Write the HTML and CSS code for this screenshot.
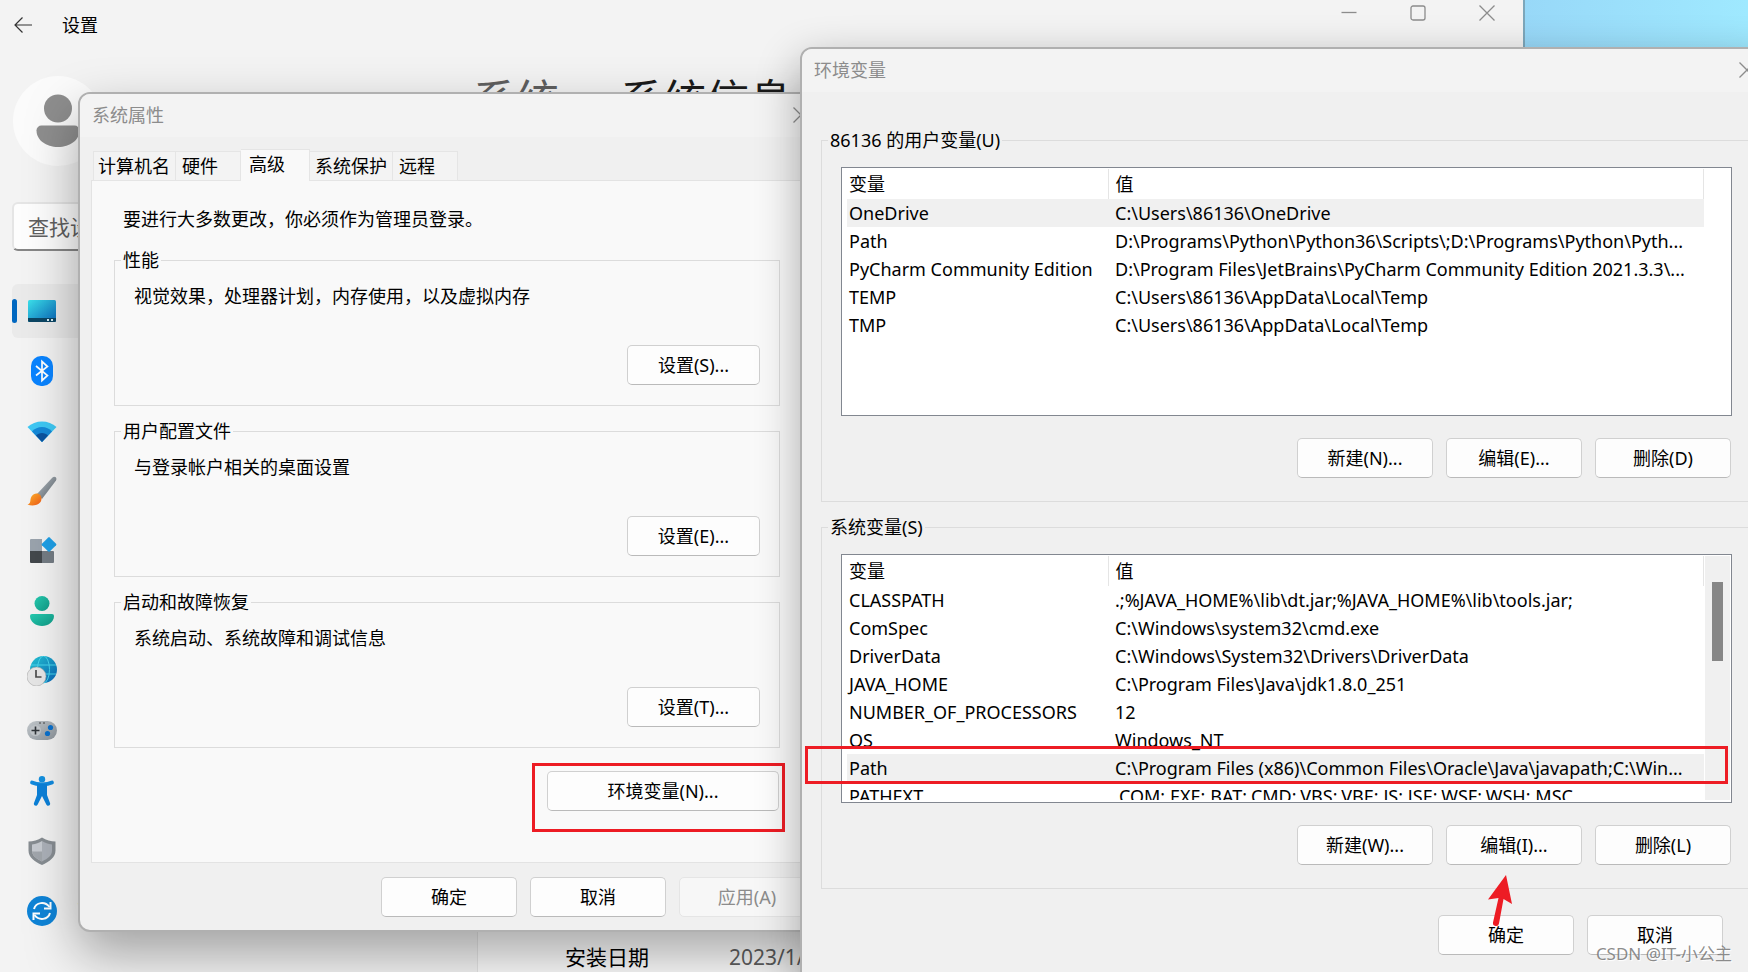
FILE: index.html
```html
<!DOCTYPE html>
<html lang="zh-CN">
<head>
<meta charset="utf-8">
<title>环境变量</title>
<link rel="stylesheet" href="styles.css">
</head>
<body>
<div class="desktop">
  <main class="settings">
    <header class="settings-bar">
      <button class="icon-btn" aria-label="返回"><svg width="20" height="18" viewBox="0 0 20 18" fill="none" stroke="#333" stroke-width="1.200"><path d="M19 9H2M9.500 1.500L2 9l7.500 7.500"/></svg></button>
      <span class="settings-name">设置</span>
      <div class="window-controls">
        <button class="icon-btn" aria-label="最小化"><svg width="16" height="16" viewBox="0 0 16 16" stroke="#8c8c8c" stroke-width="1.300"><path d="M0.500 7.500h15"/></svg></button>
        <button class="icon-btn" aria-label="最大化"><svg width="16" height="16" viewBox="0 0 16 16" fill="none" stroke="#8c8c8c" stroke-width="1.300"><rect x="1" y="1" width="14" height="14" rx="2"/></svg></button>
        <button class="icon-btn" aria-label="关闭"><svg width="16" height="16" viewBox="0 0 16 16" stroke="#8c8c8c" stroke-width="1.300"><path d="M.5.500l15 15M15.500.500l-15 15"/></svg></button>
      </div>
    </header>
    <div class="settings-body">
      <aside class="sidebar">
        <svg class="avatar" width="90" height="90" viewBox="0 0 90 90"><circle cx="45" cy="45" r="45" fill="#fbfbfb"/><circle cx="45" cy="32.500" r="14" fill="#8e8e8e"/><path d="M28.500 49.500h33a5 5 0 0 1 5 5C66.500 64 57 71 45 71s-21.500-7-21.500-16.500a5 5 0 0 1 5-5z" fill="#8e8e8e"/></svg>
        <input class="search" type="text" placeholder="查找设置" aria-label="查找设置">
        <nav class="nav">
          <a class="nav-item current" href="#system"><svg width="30" height="30" viewBox="0 0 30 30"><defs><linearGradient id="scr" x1="0" y1="0" x2="1" y2="1"><stop offset="0" stop-color="#3be0ea"/><stop offset="1" stop-color="#0a68bb"/></linearGradient></defs><rect x="1" y="4" width="28" height="22" rx="1.500" fill="url(#scr)"/><path d="M1 22h28v2.500a1.500 1.500 0 0 1-1.500 1.500h-25A1.500 1.500 0 0 1 1 24.500z" fill="#0c4664"/><path d="M20 23h2v2h-2zM24 23h2v2h-2z" fill="#d8eef5"/></svg>系统</a>
          <a class="nav-item" href="#bluetooth"><svg width="30" height="30" viewBox="0 0 30 30"><rect x="4" y="0" width="22" height="30" rx="10" fill="#0a84ff"/><path d="M9 10l11.500 9.500L15 24.500v-19l5.500 5L9 19.500" fill="none" stroke="#fff" stroke-width="1.700"/></svg>蓝牙和其他设备</a>
          <a class="nav-item" href="#network"><svg width="30" height="30" viewBox="0 0 30 30"><path d="M15 26L.5 11C8 3.500 22 3.500 29.500 11z" fill="#3ec8f4"/><path d="M15 26L5 15.500C10 9.500 20 9.500 25 15.500z" fill="#1589d8"/><path d="M15 26L9 19.500C12 16 18 16 21 19.500z" fill="#0b539f"/></svg>网络和 Internet</a>
          <a class="nav-item" href="#personal"><svg width="30" height="30" viewBox="0 0 30 30"><defs><linearGradient id="han" x1="0" y1="0" x2="1" y2="1"><stop offset="0" stop-color="#bcc3c9"/><stop offset="1" stop-color="#59636b"/></linearGradient><linearGradient id="tip" x1="0" y1="0" x2="1" y2="1"><stop offset="0" stop-color="#ffb52b"/><stop offset="1" stop-color="#ee5a18"/></linearGradient></defs><path d="M10 18L25.500 1.500c2-2 5 0 3.500 3L15 23z" fill="url(#han)"/><path d="M.5 28.500c4-1 2-4.500 4-8 3-5 10-3.500 10 2 0 7-9 8-14 6z" fill="url(#tip)"/></svg>个性化</a>
          <a class="nav-item" href="#apps"><svg width="30" height="30" viewBox="0 0 30 30"><path d="M3 4a1 1 0 0 1 1-1h11v12H3z" fill="#9aa3ad"/><path d="M3 15h12v12H4a1 1 0 0 1-1-1z" fill="#43484c"/><path d="M15 15h11a1 1 0 0 1 1 1v10a1 1 0 0 1-1 1H15z" fill="#747c84"/><rect x="16.500" y="3" width="11" height="11" rx="1" fill="#1e9fe6" transform="rotate(45 22 8.500)"/></svg>应用</a>
          <a class="nav-item" href="#accounts"><svg width="30" height="30" viewBox="0 0 30 30"><defs><linearGradient id="acc" x1="0" y1="0" x2="1" y2="1"><stop offset="0" stop-color="#26cbb0"/><stop offset="1" stop-color="#109a86"/></linearGradient></defs><circle cx="15" cy="7.500" r="7.500" fill="url(#acc)"/><path d="M5 18h20a2 2 0 0 1 2 2c0 6-6 10-12 10S3 26 3 20a2 2 0 0 1 2-2z" fill="url(#acc)"/></svg>帐户</a>
          <a class="nav-item" href="#time"><svg width="30" height="30" viewBox="0 0 30 30"><defs><linearGradient id="glo" x1="0" y1="0" x2="1" y2="1"><stop offset="0" stop-color="#25c5d4"/><stop offset="1" stop-color="#0a66b8"/></linearGradient></defs><circle cx="16.500" cy="13.500" r="13.500" fill="url(#glo)"/><ellipse cx="16.500" cy="13.500" rx="6" ry="13.500" fill="none" stroke="#48d5ec"/><path d="M4 9h25M4 18h25" stroke="#48d5ec"/><circle cx="9.500" cy="20.500" r="9.500" fill="#e6e6e6" stroke="#aaa" stroke-width=".6"/><path d="M9 14v7h5.500" fill="none" stroke="#4d4d4d" stroke-width="1.700"/></svg>时间和语言</a>
          <a class="nav-item" href="#gaming"><svg width="30" height="30" viewBox="0 0 30 30"><defs><linearGradient id="pad" x1="0" y1="0" x2="1" y2="1"><stop offset="0" stop-color="#c3c8cc"/><stop offset="1" stop-color="#8c949b"/></linearGradient></defs><rect x="0" y="5" width="30" height="19" rx="9.500" fill="url(#pad)"/><circle cx="8.500" cy="14.500" r="5.500" fill="#c0c5c9"/><path d="M8.500 10.500v8M4.500 14.500h8" stroke="#30353a" stroke-width="1.600"/><circle cx="23.500" cy="11.500" r="2.600" fill="#0a70cc"/><circle cx="20.500" cy="17.500" r="2.600" fill="#0a70cc"/><path d="M12 7h2M16 7h2" stroke="#444"/></svg>游戏</a>
          <a class="nav-item" href="#access"><svg width="30" height="30" viewBox="0 0 30 30"><circle cx="15" cy="3.300" r="3.200" fill="#1490df"/><path d="M5 6.500c5 2.500 15 2.500 20 0" fill="none" stroke="#118ade" stroke-width="3.800" stroke-linecap="round"/><path d="M10 8h10v11l3 8c1 2.500-2.500 4-3.700 1.500L15 20l-4.300 8.500C9.500 31 6 29.500 7 27l3-8z" fill="#0c80d8"/></svg>辅助功能</a>
          <a class="nav-item" href="#privacy"><svg width="30" height="30" viewBox="0 0 30 30"><path d="M15 1.500c4 2.500 9 4 13.500 4v9c0 7-6 11-13.500 14.500C7.500 25.500 1.500 21.500 1.500 14.500v-9C6 5.500 11 4 15 1.500z" fill="#878d92"/><path d="M15 5v20.500c-6-3-10-6-10-11V8.500C9 8 12 7 15 5z" fill="#c6cad0"/><path d="M15 5c3 2 6 3 10 3.500v6c0 5-4 8-10 11z" fill="#abb0b8"/><path d="M5 15.500h10v10c-5-2.500-9-5-10-10z" fill="#a1a6ac"/></svg>隐私和安全性</a>
          <a class="nav-item" href="#update"><svg width="30" height="30" viewBox="0 0 30 30"><circle cx="15" cy="15" r="15" fill="#0f84d7"/><path d="M7 13c2-7 11-8 15.500-2M23 17c-2 7-11 8-15.500 2" fill="none" stroke="#fff" stroke-width="2"/><path d="M23.500 6v6.500H17M6.500 24v-6.500H13" fill="none" stroke="#fff" stroke-width="2"/></svg>Windows 更新</a>
        </nav>
      </aside>
      <section class="content">
        <h1 class="crumbs"><span class="crumb-parent">系统</span><span class="crumb-sep">›</span><span>系统信息</span></h1>
        <dl class="spec"><dt>安装日期</dt><dd>2023/1/1</dd></dl>
      </section>
    </div>
  </main>

  <section class="dialog properties" aria-label="系统属性">
    <header class="dialog-bar"><span>系统属性</span><button class="icon-btn" aria-label="关闭"><svg width="16" height="16" viewBox="0 0 16 16" stroke="#8c8c8c" stroke-width="1.300"><path d="M.5.500l15 15M15.500.500l-15 15"/></svg></button></header>
    <div class="properties-body">
      <div class="tabs" role="tablist">
        <button class="tab tab-wide" role="tab">计算机名</button><button class="tab" role="tab">硬件</button><button class="tab tab-active" role="tab" aria-selected="true">高级</button><button class="tab tab-wide" role="tab">系统保护</button><button class="tab" role="tab">远程</button>
      </div>
      <div class="panel">
        <p class="notice">要进行大多数更改，你必须作为管理员登录。</p>
        <fieldset class="group"><legend>性能</legend><p>视觉效果，处理器计划，内存使用，以及虚拟内存</p><button class="btn">设置(S)...</button></fieldset>
        <fieldset class="group"><legend>用户配置文件</legend><p>与登录帐户相关的桌面设置</p><button class="btn">设置(E)...</button></fieldset>
        <fieldset class="group"><legend>启动和故障恢复</legend><p>系统启动、系统故障和调试信息</p><button class="btn">设置(T)...</button></fieldset>
        <div class="env-launch"><button class="btn btn-env">环境变量(N)...</button><span class="mark mark-env"></span></div>
      </div>
      <div class="actions"><button class="btn">确定</button><button class="btn">取消</button><button class="btn" disabled>应用(A)</button></div>
    </div>
  </section>

  <section class="dialog environment" aria-label="环境变量">
    <header class="dialog-bar"><span>环境变量</span><button class="icon-btn" aria-label="关闭"><svg width="16" height="16" viewBox="0 0 16 16" stroke="#8c8c8c" stroke-width="1.300"><path d="M.5.500l15 15M15.500.500l-15 15"/></svg></button></header>
    <div class="environment-body">
      <fieldset class="vars"><legend>86136 的用户变量(U)</legend>
        <div class="list">
          <table>
            <thead><tr><th class="name-col">变量</th><th>值</th></tr></thead>
            <tbody>
              <tr class="selected"><td>OneDrive</td><td>C:\Users\86136\OneDrive</td></tr>
              <tr><td>Path</td><td>D:\Programs\Python\Python36\Scripts\;D:\Programs\Python\Pyth...</td></tr>
              <tr><td>PyCharm Community Edition</td><td>D:\Program Files\JetBrains\PyCharm Community Edition 2021.3.3\...</td></tr>
              <tr><td>TEMP</td><td>C:\Users\86136\AppData\Local\Temp</td></tr>
              <tr><td>TMP</td><td>C:\Users\86136\AppData\Local\Temp</td></tr>
            </tbody>
          </table>
        </div>
        <div class="actions"><button class="btn">新建(N)...</button><button class="btn">编辑(E)...</button><button class="btn">删除(D)</button></div>
      </fieldset>
      <fieldset class="vars"><legend>系统变量(S)</legend>
        <div class="marked-list">
          <div class="list">
            <table>
              <thead><tr><th class="name-col">变量</th><th>值</th></tr></thead>
              <tbody>
                <tr><td>CLASSPATH</td><td>.;%JAVA_HOME%\lib\dt.jar;%JAVA_HOME%\lib\tools.jar;</td></tr>
                <tr><td>ComSpec</td><td>C:\Windows\system32\cmd.exe</td></tr>
                <tr><td>DriverData</td><td>C:\Windows\System32\Drivers\DriverData</td></tr>
                <tr><td>JAVA_HOME</td><td>C:\Program Files\Java\jdk1.8.0_251</td></tr>
                <tr><td>NUMBER_OF_PROCESSORS</td><td>12</td></tr>
                <tr><td>OS</td><td>Windows_NT</td></tr>
                <tr class="selected"><td>Path</td><td>C:\Program Files (x86)\Common Files\Oracle\Java\javapath;C:\Win...</td></tr>
                <tr><td>PATHEXT</td><td>.COM;.EXE;.BAT;.CMD;.VBS;.VBE;.JS;.JSE;.WSF;.WSH;.MSC</td></tr>
              </tbody>
            </table>
            <div class="scroller"><div class="thumb"></div></div>
          </div>
          <span class="mark mark-path"></span>
        </div>
        <div class="actions"><button class="btn">新建(W)...</button><div class="pointed"><button class="btn">编辑(I)...</button><svg class="arrow" width="26" height="54" viewBox="0 0 26 54"><path d="M18 0l6 29-8.500-5L11 48.500a3 3 0 0 1-6-1L10.500 23 0 24.500z" fill="#ed1c24"/></svg></div><button class="btn">删除(L)</button></div>
      </fieldset>
      <div class="actions confirm"><button class="btn">确定</button><button class="btn">取消</button></div>
    </div>
  </section>
  <div class="watermark">CSDN @IT-小公主</div>
</div>
</body>
</html>
```
FILE: styles.css
```css
* { box-sizing: border-box; }
body {
  margin: 0;
  font: 18px/24px "Noto Sans", "Noto Sans CJK SC", sans-serif;
  color: #000;
}
p, h1, dl, dd { margin: 0; }
button, input { font: inherit; color: inherit; }
.desktop {
  position: relative;
  height: 100vh;
  overflow: hidden;
  background: linear-gradient(90deg, #98d8f8 87%, #9fe9ff 100%);
}
.icon-btn {
  display: flex;
  padding: 0;
  border: 0;
  background: none;
}

/* Settings window */
.settings {
  display: flex;
  flex-direction: column;
  height: 100%;
  margin-right: 223px;
  border-right: 2px solid #7da7bb;
  background: #f3f3f3;
}
.settings-bar {
  display: flex;
  align-items: center;
  height: 50px;
  padding: 0 28px 0 13px;
  flex: none;
}
.settings-name { margin-left: 29px; }
.window-controls {
  display: flex;
  gap: 53px;
  margin-left: auto;
  align-self: flex-start;
  padding-top: 5px;
}
.settings-body { display: flex; flex: 1; min-height: 0; }
.sidebar { flex: none; width: 477px; padding: 26px 0 0 12px; }
.avatar { display: block; margin-left: 1px; }
.search {
  display: block;
  width: 420px;
  height: 49px;
  margin: 36px 0 33px;
  padding: 0 14px;
  border: 2px solid #e5e5e5;
  border-bottom-color: #868686;
  border-radius: 6px;
  background: #fdfdfd;
  font-size: 21px;
}
.search::placeholder { color: #606060; opacity: 1; }
.nav { display: grid; gap: 6px; }
.nav-item {
  position: relative;
  display: flex;
  align-items: center;
  gap: 21px;
  width: 420px;
  height: 54px;
  padding-left: 15px;
  border-radius: 6px;
  color: #1b1b1b;
  font-size: 21px;
  text-decoration: none;
}
.current { background: #eaeaea; }
.current::before {
  content: "";
  position: absolute;
  left: 0;
  top: 15px;
  width: 5px;
  height: 24px;
  border-radius: 3px;
  background: #0067c0;
}
.content {
  display: flex;
  flex: 1;
  flex-direction: column;
  justify-content: space-between;
  padding-top: 20px;
}
.crumbs {
  display: flex;
  gap: 24px;
  margin-left: -4px;
  font-size: 43px;
  font-weight: 400;
  line-height: 60px;
  color: #1b1b1b;
}
.crumb-parent, .crumb-sep { color: #5f5f5f; }
.spec {
  display: grid;
  grid-template-columns: 164px 1fr;
  margin-right: 60px;
  padding: 66px 0 3px 87px;
  border-left: 1px solid #e5e5e5;
  background: #fbfbfb;
  font-size: 21px;
}
.spec dd { color: #5f5f5f; }

/* Dialog windows */
.dialog {
  position: absolute;
  overflow: hidden;
  border: 2px solid #b0b0b0;
  border-radius: 12px;
  background: #f0f0f0;
  background-clip: padding-box;
}
.dialog-bar {
  display: flex;
  align-items: center;
  justify-content: space-between;
  height: 43px;
  padding: 0 18px 2px 12px;
  background: #f3f3f3;
  color: #8c8c8c;
}
.properties {
  left: 78px;
  top: 92px;
  width: 751px;
  box-shadow: 0 22px 52px rgba(0, 0, 0, .34);
}
.environment {
  left: 800px;
  right: -27px;
  top: 47px;
  bottom: -40px;
  box-shadow: 0 14px 44px rgba(0, 0, 0, .32);
}
.btn {
  width: 136px;
  height: 40px;
  padding: 0;
  border: 1px solid #d0d0d0;
  border-bottom-color: #bababa;
  border-radius: 5px;
  background: #fdfdfd;
  white-space: nowrap;
}
.btn:disabled { border-color: #e5e5e5; background: #f7f7f7; color: #8c8c8c; }
.actions { display: flex; justify-content: flex-end; gap: 13px; }
fieldset { min-width: 0; margin: 0; border: 1px solid #dcdcdc; }
legend { margin-left: 6px; padding: 0 2px; }

/* System properties */
.properties-body { padding: 12px 12px 13px 11px; }
.tabs { display: flex; align-items: flex-end; margin: 0 0 -1px 2px; }
.tab {
  width: 65px;
  height: 30px;
  padding: 0 0 0 6px;
  border: 1px solid #e5e5e5;
  border-left-width: 0;
  background: #f3f3f3;
  text-align: left;
  white-space: nowrap;
}
.tab-wide { width: 83px; padding-left: 5px; }
.tab:first-child { border-left-width: 1px; padding-left: 4px; }
.tab-active {
  width: 69px;
  height: 32px;
  padding: 0 0 4px 8px;
  border-bottom: 0;
  background: #f9f9f9;
}
.panel {
  padding: 26px 34px 51px 22px;
  border: 1px solid #e3e3e3;
  background: #f9f9f9;
}
.notice { padding-left: 9px; margin-bottom: 17px; }
.group {
  display: flow-root;
  margin-bottom: 13px;
  padding: 12px 19px 20px 0;
}
.group p { margin-left: 19px; }
.group .btn { display: block; width: 133px; margin: 37px 0 0 auto; }
.env-launch { position: relative; width: 232px; margin: 23px 1px 0 auto; }
.btn-env { display: block; width: 100%; }
.properties-body > .actions { margin-top: 14px; }
.mark {
  position: absolute;
  border: 3px solid #ed1c24;
  pointer-events: none;
}
.mark-env { inset: -8px -6px -21px -15px; }

/* Environment variables */
.environment-body { padding: 36px 21px 20px 19px; }
.vars { padding: 15px 19px 23px; margin-bottom: 13px; }
.vars legend { margin-left: -13px; }
.list {
  display: flex;
  align-items: flex-start;
  height: 249px;
  padding: 1px 1px 2px 5px;
  overflow: clip;
  overflow-clip-margin: content-box;
  border: 1px solid #828790;
  background: #fff;
}
table {
  flex: 1;
  min-width: 0;
  margin-right: 26px;
  table-layout: fixed;
  border-collapse: collapse;
}
.list:has(.scroller) table { margin-right: 1px; }
.name-col { width: 261px; }
th, td {
  height: 28px;
  padding: 0 0 0 7px;
  text-align: left;
  font-weight: 400;
  white-space: nowrap;
}
th { height: 30px; border-right: 1px solid #e5e5e5; }
th:first-child, td:first-child { padding-left: 2px; }
.selected { background: #f0f0f0; }
.scroller { flex: none; width: 25px; height: 100%; padding: 26px 7px 0; background: #f0f0f0; }
.thumb { height: 79px; background: #868686; }
.vars .actions { margin-top: 22px; padding-right: 1px; }
.marked-list, .pointed { position: relative; }
.mark-path { left: -36px; right: 4px; top: 192px; height: 38px; }
.arrow { position: absolute; left: 42px; top: 50px; z-index: 1; }
.confirm { margin: 26px 29px 0 0; }
.watermark {
  position: absolute;
  right: 16px;
  bottom: 6px;
  color: rgba(110, 110, 110, .8);
  font-size: 17px;
  text-shadow: 1px 1px 1px #fff;
}
```
